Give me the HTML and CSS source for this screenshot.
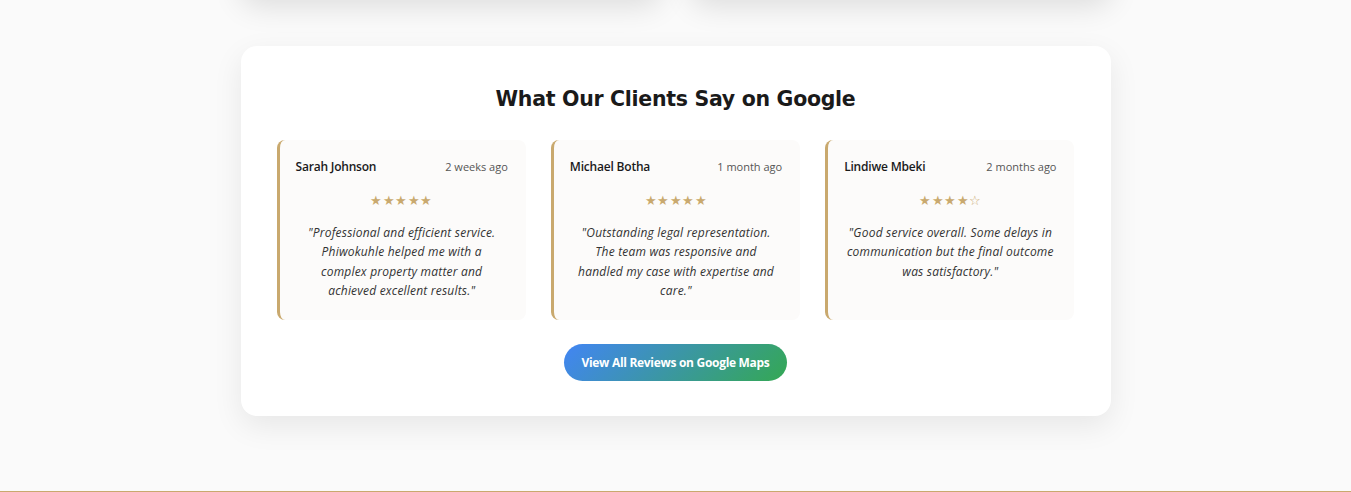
FILE: index.html
```html
<!DOCTYPE html>
<html lang="en">
<head>
<meta charset="utf-8">
<title>Reviews</title>
<link rel="stylesheet" href="styles.css">
</head>
<body>
<div class="top-row">
  <div class="top-card"></div>
  <div class="top-card"></div>
</div>
<section class="reviews">
  <h2 class="reviews-title">What Our Clients Say on Google</h2>
  <div class="review-grid">
    <article class="review">
      <div class="review-head">
        <span class="review-name">Sarah Johnson</span>
        <span class="review-date">2 weeks ago</span>
      </div>
      <div class="review-stars">★★★★★</div>
      <p class="review-text">"Professional and efficient service. Phiwokuhle helped me with a complex property matter and achieved excellent results."</p>
    </article>
    <article class="review">
      <div class="review-head">
        <span class="review-name">Michael Botha</span>
        <span class="review-date">1 month ago</span>
      </div>
      <div class="review-stars">★★★★★</div>
      <p class="review-text">"Outstanding legal representation. The team was responsive and handled my case with expertise and care."</p>
    </article>
    <article class="review">
      <div class="review-head">
        <span class="review-name">Lindiwe Mbeki</span>
        <span class="review-date">2 months ago</span>
      </div>
      <div class="review-stars">★★★★☆</div>
      <p class="review-text">"Good service overall. Some delays in communication but the final outcome was satisfactory."</p>
    </article>
  </div>
  <div class="reviews-action">
    <a class="reviews-btn" href="#">View All Reviews on Google Maps</a>
  </div>
</section>
<div class="footer-line"></div>
</body>
</html>
```
FILE: styles.css
```css
* { box-sizing: border-box; }
html, body { margin: 0; padding: 0; }
body {
  background: #fafafa;
  font-family: "Open Sans", "Liberation Sans", sans-serif;
  color: #222;
  height: 492px;
  overflow: hidden;
  position: relative;
}
.top-row {
  width: 870px;
  margin: -204px auto 0;
  display: flex;
  gap: 30px;
}
.top-card {
  flex: 1;
  height: 200px;
  background: #fff;
  border-radius: 16px;
  box-shadow: 0 10px 30px rgba(0,0,0,0.12);
}
.reviews {
  width: 870px;
  margin: 50px auto 0;
  background: #fff;
  border-radius: 16px;
  padding: 39px 36px 35px;
  box-shadow: 0 10px 30px rgba(0,0,0,0.08);
}
.reviews-title {
  margin: 0 0 26px;
  text-align: center;
  font-family: "DejaVu Sans", sans-serif;
  font-weight: 700;
  font-size: 20.5px;
  line-height: 29px;
  color: #1a1a1a;
  letter-spacing: -0.3px;
}
.review-grid {
  display: grid;
  grid-template-columns: repeat(3, 1fr);
  gap: 25px;
}
.review {
  background: #fcfbfa;
  border-left: 3px solid #c9a96e;
  border-radius: 8px;
  padding: 18px 18px 20px 16px;
}
.review-head {
  display: flex;
  justify-content: space-between;
  align-items: baseline;
  line-height: 18px;
}
.review-name {
  font-size: 12px;
  font-weight: 600;
  color: #1a1a1a;
  letter-spacing: -0.2px;
}
.review-date {
  font-size: 11px;
  color: #555;
}
.review-stars {
  margin-top: 15px;
  text-align: center;
  color: #c9a96e;
  font-size: 12.5px;
  line-height: 20px;
  letter-spacing: 0.5px;
}
.review-text {
  margin: 12px 0 0;
  padding: 0 2.5px;
  text-align: center;
  font-style: italic;
  font-size: 12px;
  line-height: 19.3px;
  letter-spacing: 0.2px;
  color: #333;
}
.reviews-action {
  display: flex;
  justify-content: center;
  margin-top: 24px;
}
.reviews-btn {
  display: inline-block;
  padding: 10px 17px;
  border-radius: 999px;
  background: linear-gradient(135deg, #4285f4, #34a853);
  color: #fff;
  font-size: 12px;
  font-weight: 700;
  line-height: 17px;
  text-decoration: none;
  letter-spacing: -0.3px;
}
.footer-line {
  position: absolute;
  left: 0;
  right: 0;
  top: 491px;
  border-top: 1px solid #c9a96e;
}
```
